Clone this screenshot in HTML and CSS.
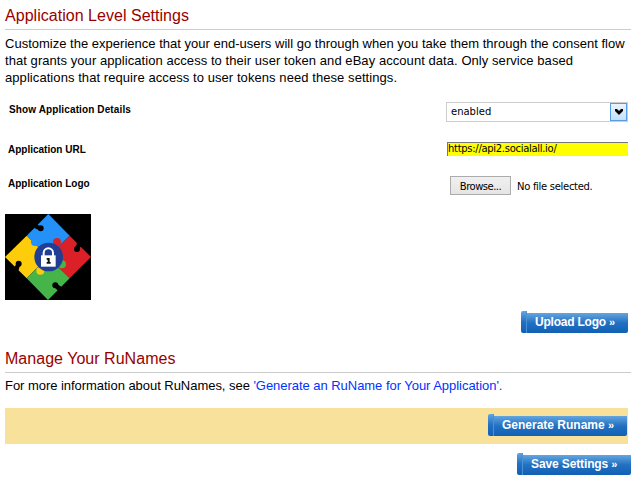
FILE: index.html
```html
<!DOCTYPE html>
<html lang="en">
<head>
<meta charset="utf-8">
<title>Application Level Settings</title>
<link rel="stylesheet" href="styles.css">
</head>
<body>
<main class="page">
  <section class="settings">
    <h2 class="heading">Application Level Settings</h2>
    <p class="copy intro"><span class="l1">Customize the experience that your end-users will go through when you take them through the consent flow</span><br><span class="l2">that grants your application access to their user token and eBay account data. Only service based</span><br><span class="l3">applications that require access to user tokens need these settings.</span></p>
    <div class="row row-details">
      <span class="label">Show Application Details</span>
      <div class="select"><span>enabled</span><span class="arrow"><svg width="8" height="6" viewBox="0 0 8 6"><path d="M0 0H2L4 2L6 0H8V2L4 6L0 2Z"/></svg></span></div>
    </div>
    <div class="row row-url">
      <span class="label">Application URL</span>
      <div class="url">https://api2.socialall.io/</div>
    </div>
    <div class="row row-logo">
      <span class="label">Application Logo</span>
      <div class="file"><button class="browse">Browse...</button><span>No file selected.</span></div>
    </div>
    <svg class="logo" width="86" height="86" viewBox="0 0 258 258">
      <rect width="258" height="258" fill="#000"/>
      <path d="M130 0L194 65L129 129L65 65Z" fill="#2391f7"/>
      <path d="M65 65L129 129L65 193L0 129Z" fill="#fdcd0c"/>
      <path d="M194 65L258 129L194 193L129 129Z" fill="#dc2027"/>
      <path d="M129 129L194 193L129 258L65 193Z" fill="#45b549"/>
      <circle cx="90" cy="84" r="12" fill="#2391f7"/>
      <circle cx="156" cy="84" r="12" fill="#dc2027"/>
      <circle cx="171" cy="151" r="12" fill="#45b549"/>
      <circle cx="106" cy="170" r="12" fill="#fdcd0c"/>
      <g fill="#000">
        <circle cx="107" cy="43" r="9"/><path d="M86 41L96 31L108 39L103 49Z"/>
        <circle cx="216" cy="105" r="9"/><path d="M217 84L229 97L219 106L211 101Z"/>
        <circle cx="41" cy="149" r="9"/><path d="M28 159L40 171L46 151L36 148Z"/>
        <circle cx="151" cy="214" r="9"/><path d="M159 230L170 219L153 208L148 220Z"/>
      </g>
      <circle cx="131" cy="129" r="43" fill="#213e94"/>
      <path d="M116 128V117a14 14 0 0 1 28 0V128" fill="none" stroke="#fff" stroke-width="6"/>
      <rect x="108" y="124" width="44" height="34" fill="#fff"/>
      <path d="M125 132h9v12h3v5h-12v-5h3v-7h-3z" fill="#111"/>
    </svg>
    <div class="actions upload"><a class="button">Upload Logo <span class="more">»</span></a></div>
  </section>
  <section class="runames">
    <h2 class="heading">Manage Your RuNames</h2>
    <p class="copy info">For more information about RuNames, see <a>'Generate an RuName for Your Application'.</a></p>
    <div class="actions band"><a class="button generate">Generate Runame <span class="more">»</span></a></div>
    <div class="actions save"><a class="button">Save Settings <span class="more">»</span></a></div>
  </section>
</main>
</body>
</html>
```
FILE: styles.css
```css
* { box-sizing: border-box; }
body { margin: 0; background: #fff; color: #000; font-family: "Liberation Sans", Arial, sans-serif; }
.page { width: 635px; height: 480px; padding-left: 5px; overflow: hidden; }
.heading { margin: 0; width: 626px; height: 30px; padding-top: 6px; border-bottom: 1px solid #ccc; color: #900; font-size: 16px; font-weight: normal; line-height: 20px; letter-spacing: 0.03px; }
.copy { margin: 0; font-size: 13px; line-height: 17px; white-space: nowrap; }
.intro { padding-top: 5px; height: 72px; }
.l1 { letter-spacing: 0.01px; }
.l2 { letter-spacing: 0.06px; }
.l3 { letter-spacing: 0.07px; }
.row { display: flex; justify-content: space-between; width: 623px; padding-left: 3px; }
.label { padding-top: 1px; font-size: 10px; font-weight: bold; line-height: 14px; }
.row-details { height: 40px; padding-left: 4px; }
.row-details .label { letter-spacing: 0.12px; }
.select { display: flex; justify-content: space-between; width: 182px; height: 20px; border: 1px solid #ccc; padding-left: 4px; font: 10px/18px "DejaVu Sans", sans-serif; }
.arrow { display: flex; align-items: center; justify-content: center; width: 17px; height: 18px; border: 1px solid #569de5; background: linear-gradient(#e9f4fe, #c5e0fa); }
.url { width: 181px; height: 14px; border-top: 1px solid #777; border-left: 1px solid #777; background: #ff0; font: 10px/12px "DejaVu Sans", sans-serif; letter-spacing: -0.3px; }
.row-url { height: 34px; }
.row-logo { height: 38px; }
.file { display: flex; width: 178px; gap: 6px; font: 10px/22px "DejaVu Sans", sans-serif; letter-spacing: -0.3px; }
.browse { width: 61px; height: 19px; padding: 1px 0 0; border: 1px solid #acacac; background: linear-gradient(#f0f0f0, #e5e5e5); font: inherit; line-height: 17px; letter-spacing: -0.5px; }
.logo { display: block; }
.actions { display: flex; justify-content: flex-end; }
.button { display: block; position: relative; height: 20px; border-left: 1px solid #8fc0ea; border-bottom-right-radius: 2px; background: linear-gradient(#63a6e0, #2270c2 50%, #1160b4); color: #fff; font-size: 12px; font-weight: bold; line-height: 18px; white-space: nowrap; }
.button::before { content: ""; position: absolute; left: -6px; top: -2px; width: 5px; height: 22px; border-radius: 2px 0 0 2px; border-right: 1px solid #4a92d6; background: linear-gradient(#63a6e0, #2270c2 50%, #1160b4); }
.more { font-size: 11px; }
.upload { width: 623px; padding-top: 13px; height: 43px; }
.upload .button { width: 102px; padding-left: 8px; letter-spacing: -0.22px; }
.info { padding-top: 4px; height: 35px; letter-spacing: -0.04px; }
.info a { color: #0033ff; }
.band { width: 623px; height: 36px; padding: 8px 1px 0 0; background: #f8e19a; }
.generate { width: 134px; padding-left: 8px; }
.save { width: 626px; padding-top: 11px; }
.save .button { width: 109px; padding-left: 8px; letter-spacing: -0.12px; }
```
